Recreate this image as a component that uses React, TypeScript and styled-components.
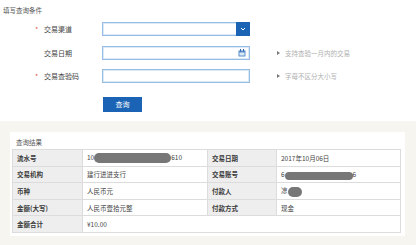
import React from "react";
import styled, { createGlobalStyle } from "styled-components";

const Global = createGlobalStyle`
  html, body { margin: 0; padding: 0; }
  body {
    background: #f7f5f0;
    font-family: "Noto Sans CJK SC", "Noto Sans", sans-serif;
    color: #333;
  }
`;

const Page = styled.div`
  width: 416px;
  height: 245px;
  overflow: hidden;
  display: flex;
  flex-direction: column;
`;

const FormPanel = styled.section`
  background: #fff;
  height: 121px;
  box-sizing: border-box;
  padding-top: 5px;
`;

const PanelTitle = styled.div`
  font-size: 6.5px;
  line-height: 10px;
  color: #555;
  padding-left: 3px;
`;

const FormGrid = styled.div`
  display: grid;
  grid-template-columns: 102px 148px auto;
  grid-auto-rows: 14px;
  row-gap: 9.5px;
  margin-top: 7px;
  align-items: center;
`;

const LabelCell = styled.div`
  display: flex;
  align-items: center;
  padding-left: 35px;
  font-size: 7px;
  color: #444;
`;

const Star = styled.span<{ $show: boolean }>`
  width: 9px;
  color: #e8554e;
  font-size: 7px;
  visibility: ${(p) => (p.$show ? "visible" : "hidden")};
`;

const InputBox = styled.div`
  height: 14px;
  box-sizing: border-box;
  border: 1px solid #96bde5;
  box-shadow: inset 0 0 0 1px #dbe9f7;
  background: #fff;
  display: flex;
  justify-content: flex-end;
  align-items: center;
`;

const DropButton = styled.div`
  width: 14px;
  height: 14px;
  margin: -1px -1px -1px 0;
  background: #1b64b5;
  display: flex;
  align-items: center;
  justify-content: center;
`;

const CalIcon = styled.div`
  margin-right: 3px;
  display: flex;
`;

const HintCell = styled.div`
  display: flex;
  align-items: center;
  padding-left: 27px;
  font-size: 6.5px;
  color: #b0b0b0;
`;

const HintArrow = styled.span`
  width: 0;
  height: 0;
  border-top: 2.5px solid transparent;
  border-bottom: 2.5px solid transparent;
  border-left: 3px solid #777;
  margin-right: 5px;
`;

const SubmitRow = styled.div`
  display: flex;
  padding-left: 103px;
  margin-top: 14px;
`;

const SubmitButton = styled.button`
  width: 39px;
  height: 15px;
  padding: 0;
  border: none;
  background: #1b64b5;
  color: #fff;
  font-family: inherit;
  font-size: 7px;
  line-height: 15px;
  cursor: pointer;
`;

const ResultCard = styled.section`
  margin: 11px 0 0 10px;
  width: 395px;
  height: 104px;
  background: #fff;
  box-sizing: border-box;
  padding: 6px 5px 0 2px;
`;

const CardTitle = styled.div`
  font-size: 6.5px;
  line-height: 9px;
  color: #555;
  padding-left: 4px;
  margin-bottom: 2px;
`;

const Table = styled.table`
  width: 388px;
  border-collapse: collapse;
  table-layout: fixed;
  font-size: 6.5px;
`;

const Th = styled.th`
  background: #eeeeee;
  border: 1px solid #dcdcdc;
  height: 16.6px;
  padding: 0 0 0 4px;
  text-align: left;
  font-weight: bold;
  color: #3a3a3a;
  box-sizing: border-box;
`;

const Td = styled.td`
  border: 1px solid #dcdcdc;
  height: 16.6px;
  padding: 0 0 0 4px;
  color: #444;
  box-sizing: border-box;
  white-space: nowrap;
  overflow: hidden;
`;

const Redact = styled.span<{ $w: number; $h: number }>`
  display: inline-block;
  vertical-align: middle;
  width: ${(p) => p.$w}px;
  height: ${(p) => p.$h}px;
  border-radius: 5px;
  background: #777;
`;

const Chevron = () => (
  <svg width="6" height="4" viewBox="0 0 6 4">
    <path d="M1 1 L3 3 L5 1" fill="none" stroke="#fff" strokeWidth="1" />
  </svg>
);

const Calendar = () => (
  <svg width="8" height="8" viewBox="0 0 8 8">
    <rect x="0.5" y="1.5" width="7" height="6" fill="#5b8fcc" />
    <rect x="1.5" y="3.5" width="5" height="3" fill="#dbe8f6" />
    <rect x="2" y="0" width="1" height="2.5" fill="#2d66aa" />
    <rect x="5" y="0" width="1" height="2.5" fill="#2d66aa" />
  </svg>
);

export default function App() {
  return (
    <>
      <Global />
      <Page>
        <FormPanel>
          <PanelTitle>填写查询条件</PanelTitle>
          <FormGrid>
            <LabelCell>
              <Star $show>*</Star>交易渠道
            </LabelCell>
            <InputBox>
              <DropButton>
                <Chevron />
              </DropButton>
            </InputBox>
            <div />

            <LabelCell>
              <Star $show={false}>*</Star>交易日期
            </LabelCell>
            <InputBox>
              <CalIcon>
                <Calendar />
              </CalIcon>
            </InputBox>
            <HintCell>
              <HintArrow />
              支持查验一月内的交易
            </HintCell>

            <LabelCell>
              <Star $show>*</Star>交易查验码
            </LabelCell>
            <InputBox />
            <HintCell>
              <HintArrow />
              字母不区分大小写
            </HintCell>
          </FormGrid>
          <SubmitRow>
            <SubmitButton>查询</SubmitButton>
          </SubmitRow>
        </FormPanel>

        <ResultCard>
          <CardTitle>查询结果</CardTitle>
          <Table>
            <colgroup>
              <col style={{ width: 70 }} />
              <col style={{ width: 125 }} />
              <col style={{ width: 69 }} />
              <col style={{ width: 124 }} />
            </colgroup>
            <tbody>
              <tr>
                <Th>流水号</Th>
                <Td>
                  10<Redact $w={77} $h={10} />610
                </Td>
                <Th>交易日期</Th>
                <Td>2017年10月06日</Td>
              </tr>
              <tr>
                <Th>交易机构</Th>
                <Td>建行进进支行</Td>
                <Th>交易账号</Th>
                <Td>
                  6<Redact $w={68} $h={8} />6
                </Td>
              </tr>
              <tr>
                <Th>币种</Th>
                <Td>人民币元</Td>
                <Th>付款人</Th>
                <Td>
                  凉<Redact $w={14} $h={10} />
                </Td>
              </tr>
              <tr>
                <Th>金额(大写)</Th>
                <Td>人民币壹拾元整</Td>
                <Th>付款方式</Th>
                <Td>现金</Td>
              </tr>
              <tr>
                <Th>金额合计</Th>
                <Td colSpan={3}>¥10.00</Td>
              </tr>
            </tbody>
          </Table>
        </ResultCard>
      </Page>
    </>
  );
}
